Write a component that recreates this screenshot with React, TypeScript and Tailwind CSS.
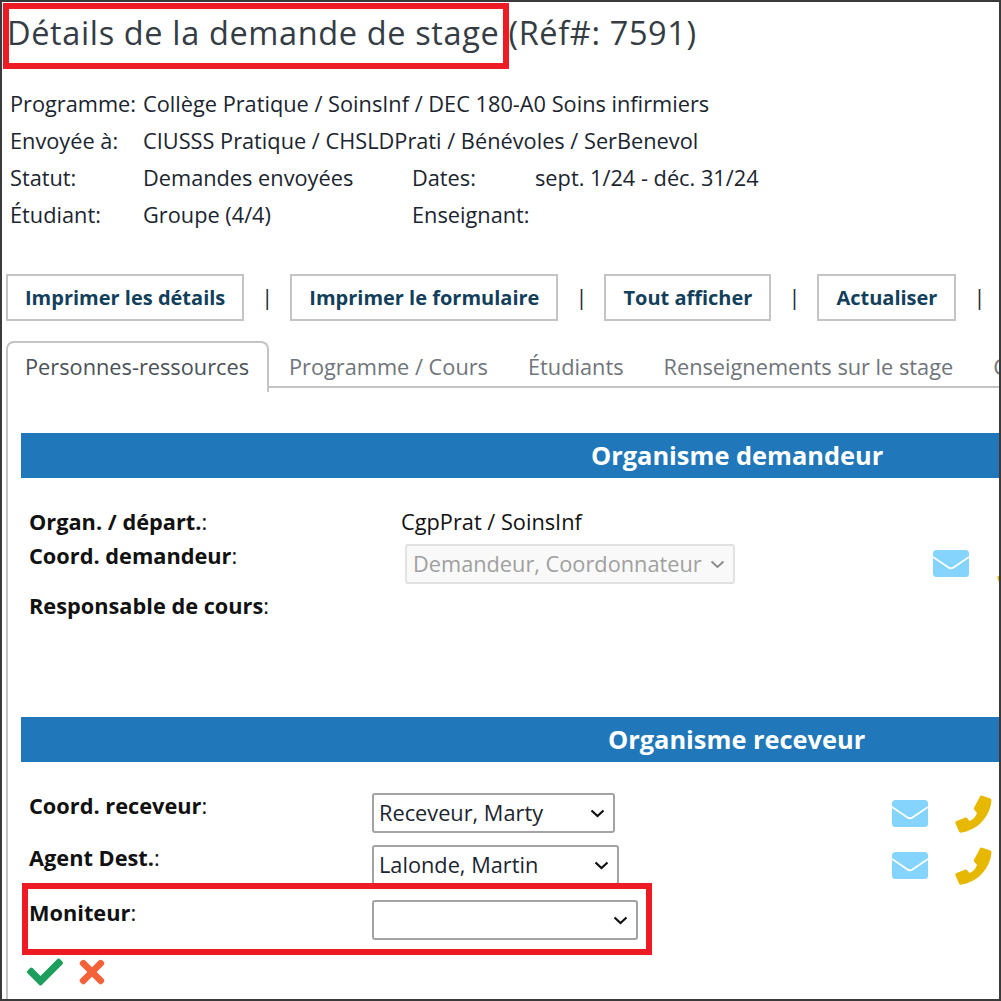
import { FaCheck, FaTimes } from "react-icons/fa";

function Mail({ className = "" }: { className?: string }) {
  return (
    <svg viewBox="0 0 36 27" className={`w-9 h-[27px] shrink-0 ${className}`}>
      <rect x="0" y="0" width="36" height="27" rx="3.5" fill="#85d4fe" />
      <path d="M0 7 L15.5 17.5 Q18 19 20.5 17.5 L36 7" fill="none" stroke="#fff" strokeWidth="1.8" />
    </svg>
  );
}

function Phone({ className = "" }: { className?: string }) {
  return (
    <svg viewBox="0 0 37 38" className={`w-[37px] h-[38px] shrink-0 ${className}`}>
      <path
        fill="#e6b800"
        d="M26.5 0.5 L35.5 3.5 Q36.8 4 36.4 6 C34.5 23 22 35 6.5 37.5 Q4.5 38 4 36.5 L0.3 28 Q0 26.5 1.5 26 L10.5 22.5 Q11.5 22.2 12 23 L14.5 26 C18 24.5 20.5 22 22 18 L19 14.5 Q18.5 13.5 19 12.7 L25 1.5 Q25.5 0.3 26.5 0.5 Z"
      />
    </svg>
  );
}

function Select({ value, className, disabled }: { value: string; className: string; disabled?: boolean }) {
  return (
    <div className={`relative h-10 shrink-0 ${className}`}>
      <select
        disabled={disabled}
        className={
          disabled
            ? "w-full h-full appearance-none pl-[6px] border-2 border-[#e2e2e2] rounded-[3px] bg-[#f9f9f9] text-[#a0a0a0] opacity-100"
            : "w-full h-full appearance-none pl-[5px] border-2 border-[#a3a3a3] rounded-[3px] bg-white text-[#1b2530]"
        }
      >
        <option>{value}</option>
      </select>
      <svg viewBox="0 0 15 9" className="absolute right-[10px] top-[16px] w-[15px] h-[9px]" fill="none" stroke={disabled ? "#8a8a8a" : "#111"} strokeWidth={disabled ? 1.8 : 2.2}>
        <path d="M1.5 1.5 L7.5 7 L13.5 1.5" />
      </svg>
    </div>
  );
}

function InfoRow({ label, value, label2, value2 }: { label: string; value: string; label2?: string; value2?: string }) {
  return (
    <div className="flex h-[37px] items-center">
      <div className="w-[133px] shrink-0">{label}</div>
      <div className="w-[269px] shrink-0 whitespace-nowrap">{value}</div>
      {label2 && <div className="w-[123px] shrink-0">{label2}</div>}
      {value2 && <div className="whitespace-nowrap">{value2}</div>}
    </div>
  );
}

function Btn({ children }: { children: string }) {
  return (
    <button className="h-[47px] px-[17px] border-2 border-[#c4c4c4] bg-white font-bold text-[20px] text-[#123f5c] whitespace-nowrap shrink-0">
      {children}
    </button>
  );
}

function Sep() {
  return <span className="w-[46px] shrink-0 text-center text-[#1d2a33]">|</span>;
}

function SectionBar({ title, pad }: { title: string; pad: string }) {
  return (
    <div className={`h-[45px] w-[1100px] bg-[#2078ba] flex items-center text-white font-bold text-[25.4px] ${pad}`}>
      {title}
    </div>
  );
}

export default function App() {
  return (
    <div className="relative w-[1001px] h-[1001px] overflow-hidden bg-white border-2 border-[#3a3a3a] text-[21.75px] text-[#1b2530] font-['Open_Sans',sans-serif]">
      <div className="w-[1100px] pl-[4px]">
        <h1 className="h-[60px] pl-[1px] pt-[9px] text-[32.5px] leading-[44px] tracking-[0.63px] text-[#343c44] whitespace-nowrap">
          Détails de la demande de stage (Réf#: 7591)
        </h1>
        <div className="pl-[4px] mt-[24px]">
          <InfoRow label="Programme:" value="Collège Pratique / SoinsInf / DEC 180-A0 Soins infirmiers" />
          <InfoRow label="Envoyée à:" value="CIUSSS Pratique / CHSLDPrati / Bénévoles / SerBenevol" />
          <InfoRow label="Statut:" value="Demandes envoyées" label2="Dates:" value2="sept. 1/24 - déc. 31/24" />
          <InfoRow label="Étudiant:" value="Groupe (4/4)" label2="Enseignant:" />
        </div>

        <div className="flex items-center mt-[40px]">
          <Btn>Imprimer les détails</Btn>
          <Sep />
          <Btn>Imprimer le formulaire</Btn>
          <Sep />
          <Btn>Tout afficher</Btn>
          <Sep />
          <Btn>Actualiser</Btn>
          <Sep />
        </div>

        <div className="relative flex h-[47px] mt-[20px] border-b-2 border-[#c4c4c4] text-[#6f757b]">
          <div className="relative h-[51px] w-[263px] shrink-0 border-t-2 border-l-2 border-r-2 border-[#c4c4c4] rounded-t-[8px] bg-white pl-[17px] pt-[8px] text-[#4a5158]">
            Personnes-ressources
          </div>
          <div className="flex gap-[40px] pl-[20px] pt-[10px] whitespace-nowrap">
            <span>Programme / Cours</span>
            <span>Étudiants</span>
            <span>Renseignements sur le stage</span>
            <span>Coordonnées</span>
          </div>
        </div>

        <div className="border-l-2 border-[#c4c4c4] pl-[13px] pt-[45px] h-[620px] text-[#111]">
          <SectionBar title="Organisme demandeur" pad="pl-[570px]" />
          <div className="mt-[28px] pl-[8px]">
            <div className="flex h-[34px] items-start">
              <div className="w-[372px] shrink-0"><b>Organ. / départ.</b>:</div>
              <div>CgpPrat / SoinsInf</div>
            </div>
            <div className="flex h-[50px] items-start">
              <div className="w-[376px] shrink-0"><b>Coord. demandeur</b>:</div>
              <Select disabled value="Demandeur, Coordonnateur" className="w-[330px] mt-[4px]" />
              <Mail className="ml-[198px] mt-[10px]" />
              <Phone className="ml-[28px] mt-[10px]" />
            </div>
            <div className="h-[38px]"><b>Responsable de cours</b>:</div>
          </div>
          <div className="mt-[89px]">
            <SectionBar title="Organisme receveur" pad="pl-[587px]" />
          </div>
          <div className="mt-[28px] pl-[8px]">
            <div className="flex h-[52px] items-start">
              <div className="w-[343px] shrink-0"><b>Coord. receveur</b>:</div>
              <Select value="Receveur, Marty" className="w-[243px] mt-[3px]" />
              <Mail className="ml-[277px] mt-[10px]" />
              <Phone className="ml-[27px] mt-[5px]" />
            </div>
            <div className="flex h-[55px] items-start">
              <div className="w-[343px] shrink-0"><b>Agent Dest.</b>:</div>
              <Select value="Lalonde, Martin" className="w-[247px] mt-[3px]" />
              <Mail className="ml-[273px] mt-[10px]" />
              <Phone className="ml-[27px] mt-[5px]" />
            </div>
            <div className="flex h-[61px] items-start">
              <div className="w-[343px] shrink-0"><b>Moniteur</b>:</div>
              <Select value="" className="w-[266px] mt-[3px]" />
            </div>
            <div className="flex h-[27px] items-center -ml-[2px]">
              <FaCheck className="w-[36px] h-[36px] shrink-0 text-[#1d9e5c]" />
              <FaTimes className="ml-[16px] w-[26px] h-[36px] shrink-0 text-[#f4623a]" />
            </div>
          </div>
        </div>
      </div>

      <div className="absolute left-[1px] top-[1px] w-[506px] h-[66px] border-[6px] border-[#ed1c24] pointer-events-none" />
      <div className="absolute left-[20px] top-[881px] w-[630px] h-[72px] border-[6px] border-[#ed1c24] pointer-events-none" />
    </div>
  );
}
